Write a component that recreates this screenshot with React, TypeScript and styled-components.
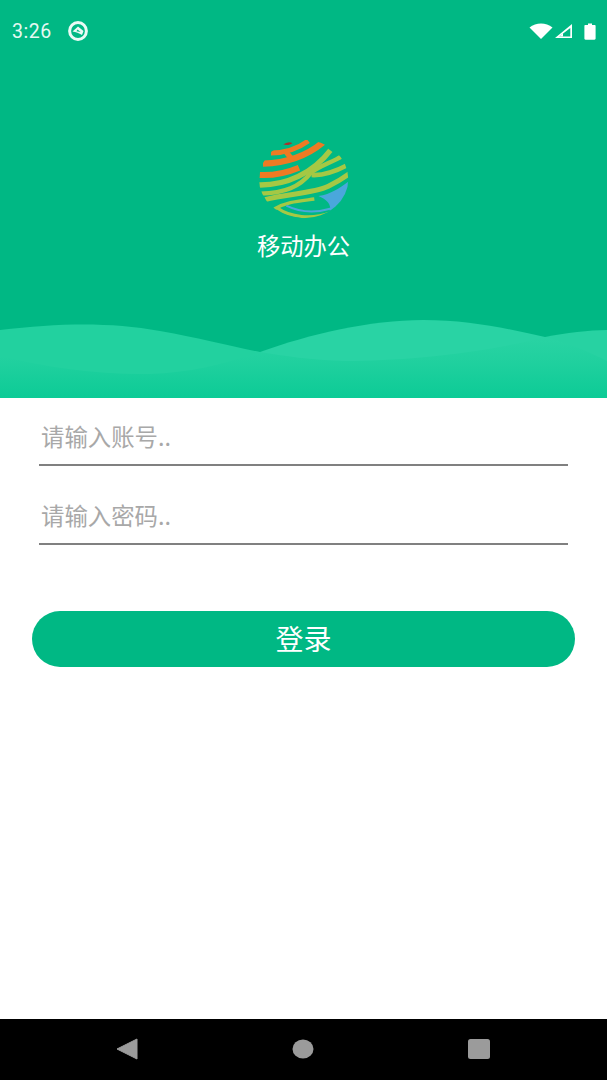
import React from 'react';
import styled, { createGlobalStyle } from 'styled-components';

const GlobalStyle = createGlobalStyle`
  html, body {
    margin: 0;
    padding: 0;
    background: #ffffff;
  }
  * {
    box-sizing: border-box;
  }
`;

const Screen = styled.div`
  width: 607px;
  height: 1080px;
  display: flex;
  flex-direction: column;
  overflow: hidden;
  background: #ffffff;
  font-family: 'Noto Sans CJK SC', 'Noto Sans', sans-serif;
`;

const Header = styled.header`
  height: 398px;
  display: flex;
  flex-direction: column;
  align-items: center;
  background: #00b884;
`;

const StatusBar = styled.div`
  width: 100%;
  height: 48px;
  padding: 16px 11px 0 12px;
  display: flex;
  align-items: flex-start;
  justify-content: space-between;
`;

const StatusLeft = styled.div`
  display: flex;
  align-items: center;
  gap: 15px;
  height: 32px;
  margin-top: -1px;
`;

const Clock = styled.span`
  font-family: Roboto, sans-serif;
  font-size: 19.5px;
  letter-spacing: 0.5px;
  color: #e6f8f2;
`;

const StatusRight = styled.div`
  display: flex;
  align-items: center;
  height: 32px;
  margin-top: -1px;
`;

const Brand = styled.div`
  margin-top: 91px;
  display: flex;
  flex-direction: column;
  align-items: center;
`;

const AppName = styled.div`
  margin-top: 9px;
  font-size: 23.3px;
  line-height: 34px;
  color: #ffffff;
`;

const Waves = styled.svg`
  display: block;
  margin-top: auto;
  flex-shrink: 0;
`;

const Form = styled.form`
  padding: 12px 32px 0;
  display: flex;
  flex-direction: column;
`;

const Field = styled.input`
  display: block;
  width: calc(100% - 14px);
  height: 56px;
  margin: 0 7px 23px;
  padding: 0 2px 3px;
  border: none;
  border-bottom: 2px solid #808080;
  border-radius: 0;
  outline: none;
  background: transparent;
  font-family: inherit;
  font-size: 23.4px;
  color: #333333;

  &::placeholder {
    color: #a8a8a8;
    opacity: 1;
  }
`;

const LoginButton = styled.button`
  height: 56px;
  margin-top: 43px;
  padding: 0 0 2px;
  border: none;
  border-radius: 28px;
  background: #00b884;
  color: #ffffff;
  font-family: inherit;
  font-size: 28px;
`;

const NavBar = styled.nav`
  margin-top: auto;
  height: 61px;
  background: #000000;
  display: flex;
  align-items: center;
  justify-content: space-between;
  padding: 0 117px 2px 116px;
`;

const SyncIcon = () => (
  <svg width="22" height="22" viewBox="0 0 22 22">
    <circle cx="11" cy="11" r="8.4" fill="none" stroke="#eafaf5" strokeWidth="3" />
    <path d="M5.5 11.5 L11 6.5 L16.5 11 L15 15 C12 13 9 12 5.5 11.5 Z" fill="#eafaf5" />
    <path d="M10.5 9.5 L13.5 12 L9.5 11.2 Z" fill="#00b884" />
  </svg>
);

const WifiIcon = () => (
  <svg width="24" height="16" viewBox="0 0 24 16">
    <path d="M0.5 4.5 C7 -1 17 -1 23.5 4.5 L12 16 Z" fill="#ffffff" />
  </svg>
);

const SignalIcon = () => (
  <svg width="19" height="16" viewBox="0 0 19 16" style={{ marginLeft: 1 }}>
    <path d="M18 1 V15 H1 Z M16.3 5 L5.2 13.5 H16.3 Z" fill="#ffffff" fillRule="evenodd" />
    <path d="M9 13.5 L9 10.2 L5.2 13.5 Z" fill="#ffffff" />
  </svg>
);

const BatteryIcon = () => (
  <svg width="12" height="17" viewBox="0 0 12 17" style={{ marginLeft: 11 }}>
    <path d="M4 0.5 H8 V2 H10.5 C11.2 2 11.6 2.4 11.6 3 V15.6 C11.6 16.3 11.2 16.7 10.5 16.7 H1.5 C0.8 16.7 0.4 16.3 0.4 15.6 V3 C0.4 2.4 0.8 2 1.5 2 H4 Z" fill="#ffffff" />
  </svg>
);

const GlobeLogo = () => (
  <svg width="90" height="80" viewBox="48 28 270 240">
    <defs>
      <clipPath id="globe">
        <ellipse cx="182" cy="148" rx="134" ry="118" />
      </clipPath>
    </defs>
    <g clipPath="url(#globe)" fill="none">
      <path d="M120 43 C128 37 140 37 148 40 C140 47 128 48 120 43 Z" fill="#a8322c" />
      <path d="M84 70 C120 70 160 60 196 34" stroke="#ee7a23" strokeWidth="15" />
      <path d="M60 102 C120 100 185 84 240 38" stroke="#ee7a23" strokeWidth="19" />
      <path d="M125 62 L150 92" stroke="#ee7a23" strokeWidth="16" />
      <path d="M50 136 C92 138 130 130 168 114" stroke="#ee7a23" strokeWidth="18" />
      <path d="M46 166 C130 168 210 130 262 62" stroke="#a5c844" strokeWidth="16" />
      <path d="M52 192 C125 190 170 172 205 128 C232 108 266 98 296 80" stroke="#a5c844" strokeWidth="13" />
      <path d="M206 136 C240 138 280 124 314 106" stroke="#a5c844" strokeWidth="14" />
      <path d="M66 210 C130 192 210 192 256 170 C280 158 300 146 322 130" stroke="#a5c844" strokeWidth="15" />
      <path d="M94 238 C130 216 170 214 214 208" stroke="#a5c844" strokeWidth="10" />
      <path d="M226 199 C270 192 295 170 330 146 L330 256 L250 256 C272 240 262 212 226 199 Z" fill="#4aa7dc" />
      <path d="M130 228 C170 248 220 250 268 236" stroke="#4aa7dc" strokeWidth="6" />
      <path d="M104 236 C140 262 205 270 262 250" stroke="#a5c844" strokeWidth="9" />
    </g>
  </svg>
);

const WaveBackdrop = () => (
  <Waves width="607" height="88" viewBox="0 0 607 88">
    <defs>
      <linearGradient id="waveFade" gradientUnits="userSpaceOnUse" x1="0" y1="20" x2="0" y2="88">
        <stop offset="0" stopColor="#2cd4a5" />
        <stop offset="0.5" stopColor="#1fd09e" />
        <stop offset="1" stopColor="#0ccb96" />
      </linearGradient>
    </defs>
    <path d="M0 20 C60 13 110 12 160 21 C200 28 230 36 260 42 L260 88 H0 Z" fill="#22d19f" />
    <path d="M260 42 C310 24 370 10 423 10 C470 10 510 19 545 27 C565 32 590 42 607 51 V88 H260 Z" fill="#29d3a4" />
    <path d="M545 27 C565 23 590 20 607 20 V60 H545 Z" fill="#27d2a2" />
    <path d="M260 42 C285 46 310 50 346 51 C400 51 480 44 545 27 C565 32 590 42 607 51 V88 H0 V46 C50 58 100 65 150 64 C190 63 225 54 260 42 Z" fill="url(#waveFade)" />
  </Waves>
);

const App: React.FC = () => {
  return (
    <Screen>
      <GlobalStyle />
      <Header>
        <StatusBar>
          <StatusLeft>
            <Clock>3:26</Clock>
            <SyncIcon />
          </StatusLeft>
          <StatusRight>
            <WifiIcon />
            <SignalIcon />
            <BatteryIcon />
          </StatusRight>
        </StatusBar>
        <Brand>
          <GlobeLogo />
          <AppName>移动办公</AppName>
        </Brand>
        <WaveBackdrop />
      </Header>
      <Form onSubmit={(e) => e.preventDefault()}>
        <Field type="text" placeholder="请输入账号.." />
        <Field type="password" placeholder="请输入密码.." />
        <LoginButton type="submit">登录</LoginButton>
      </Form>
      <NavBar>
        <svg width="22" height="22" viewBox="0 0 22 22">
          <path d="M21 1 V21 L1 11 Z" fill="#9b9b9b" stroke="#9b9b9b" strokeWidth="1" strokeLinejoin="round" />
        </svg>
        <svg width="22" height="20" viewBox="0 0 22 20">
          <ellipse cx="11" cy="10" rx="10.5" ry="9.5" fill="#9b9b9b" />
        </svg>
        <svg width="22" height="20" viewBox="0 0 22 20">
          <rect x="0" y="0" width="22" height="20" rx="2.5" fill="#9b9b9b" />
        </svg>
      </NavBar>
    </Screen>
  );
};

export default App;
